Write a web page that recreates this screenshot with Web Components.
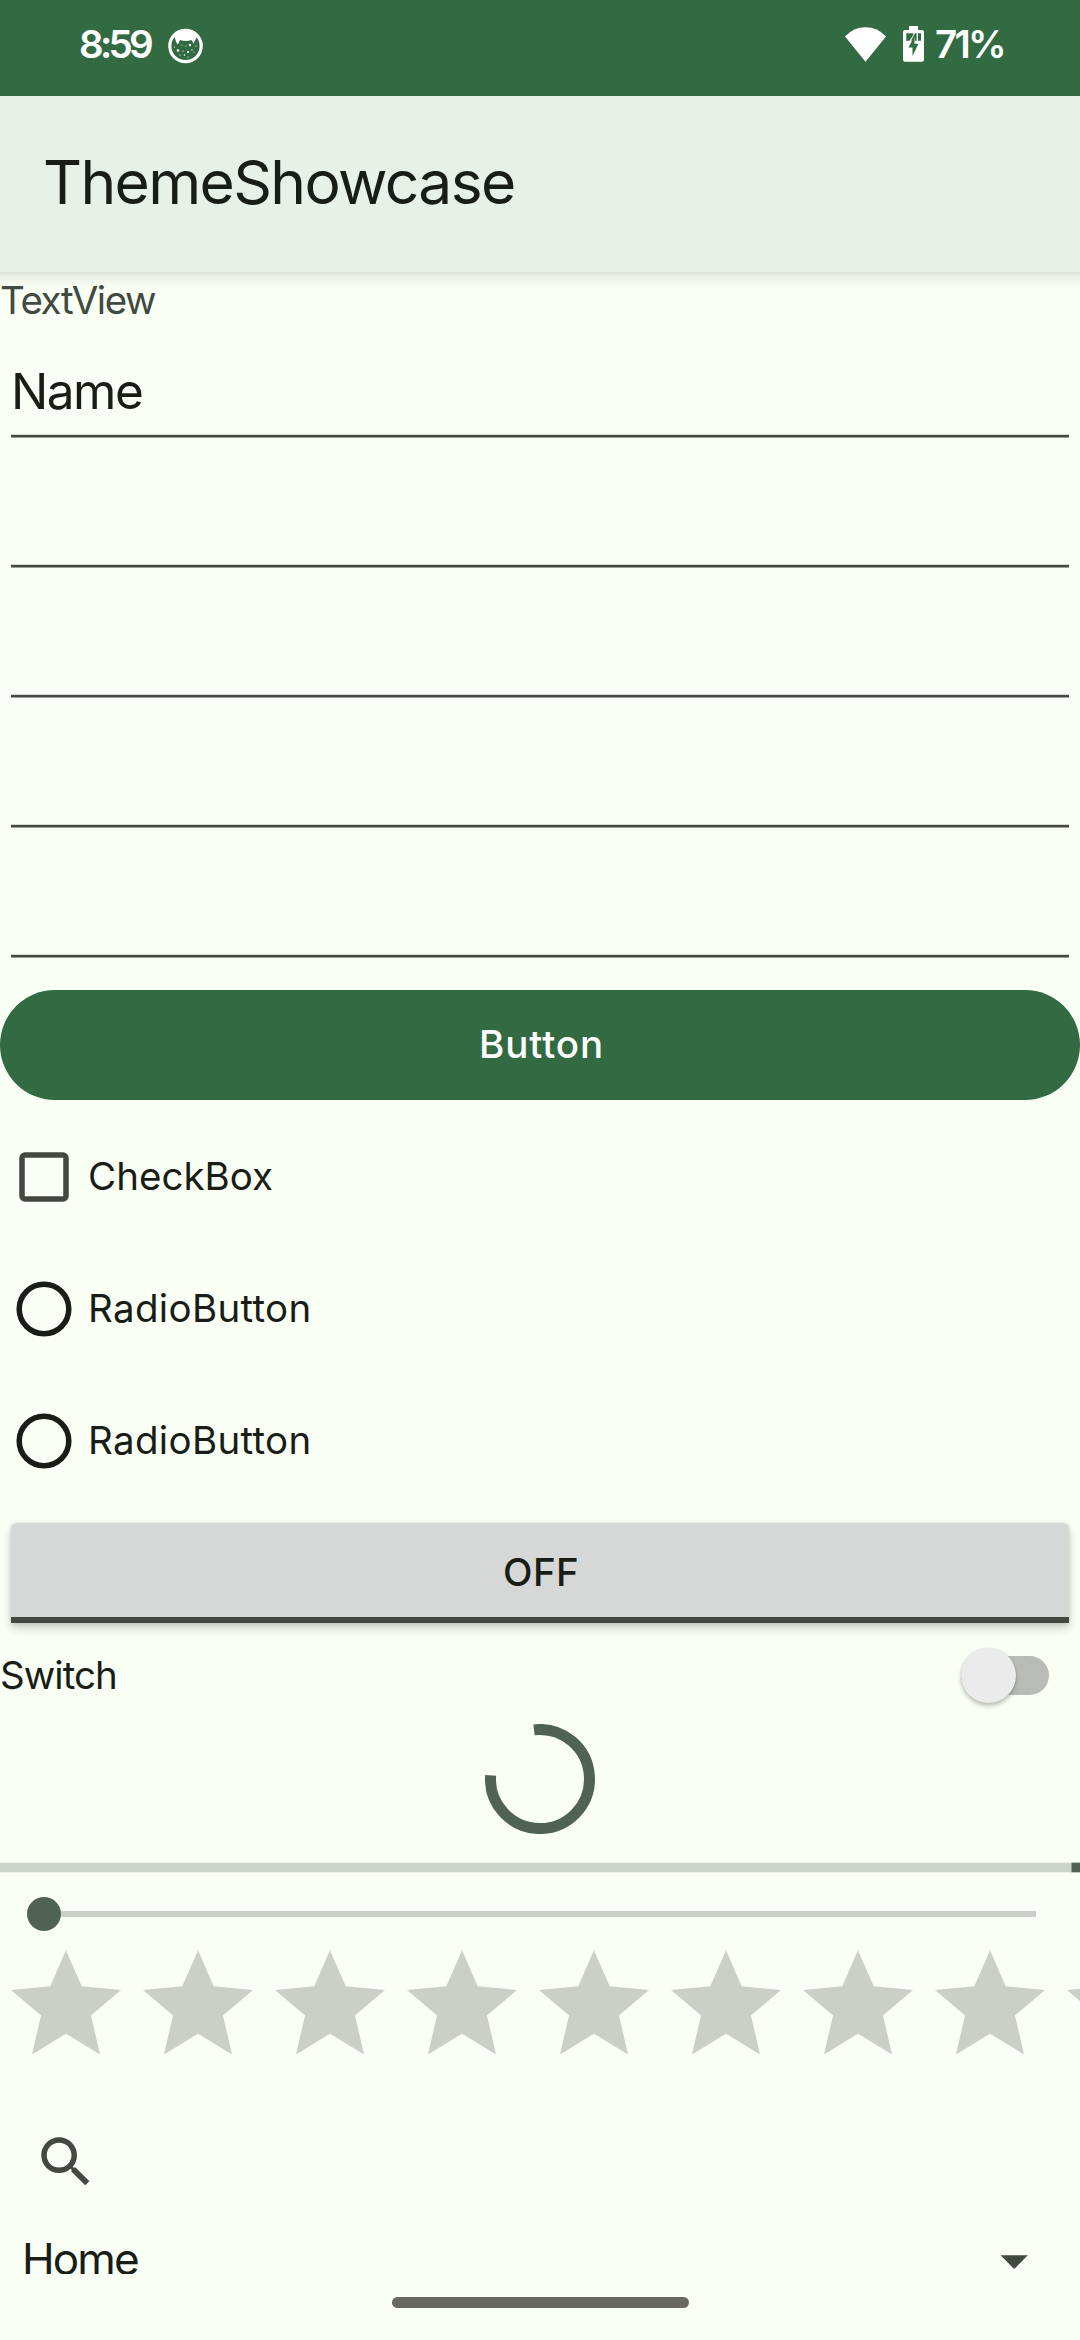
<!DOCTYPE html>
<html lang="en">
<head>
<meta charset="utf-8">
<title>ThemeShowcase</title>
<style>
html,body{margin:0;padding:0}
body{width:1080px;height:2340px;overflow:hidden;background:#f9fff5;font-family:Inter,Roboto,sans-serif}
</style>
</head>
<body>
<theme-showcase></theme-showcase>
<script>
function define(name, html, ready) {
  const tpl = document.createElement('template');
  tpl.innerHTML = html;
  customElements.define(name, class extends HTMLElement {
    constructor() {
      super();
      this.attachShadow({mode: 'open'}).append(tpl.content.cloneNode(true));
    }
    connectedCallback() { if (ready) ready.call(this, this.shadowRoot); }
  });
}

/* One line of text whose letters are spaced to fill the width in its "w" attribute. */
define('ui-text', `<style>
:host{display:block;flex:none;white-space:nowrap;color:#191d17;font-size:38.5px;line-height:1.3}
span{display:block}
</style><span><slot></slot></span>`, function (root) {
  const span = root.querySelector('span');
  const w = parseFloat(this.getAttribute('w'));
  const size = parseFloat(this.getAttribute('size') || 38.5);
  const weight = this.getAttribute('weight') || 400;
  const text = this.textContent;
  const ctx = document.createElement('canvas').getContext('2d');
  ctx.font = weight + ' ' + size + 'px Inter, Roboto, sans-serif';
  const m = ctx.measureText(text);
  const ink = m.actualBoundingBoxLeft + m.actualBoundingBoxRight;
  this.style.width = w + 'px';
  this.style.fontSize = size + 'px';
  this.style.fontWeight = weight;
  span.style.letterSpacing = ((w - ink) / (text.length - 1)) + 'px';
  span.style.marginLeft = m.actualBoundingBoxLeft + 'px';
});

define('status-bar', `<style>
:host{display:flex;align-items:center;box-sizing:border-box;height:96px;padding:0 77px 8px 80px;background:#326a41}
ui-text{color:#fff}
svg{display:block;flex:none}
.app{margin-left:16px;margin-top:3px}
.wifi{margin-left:auto}
.bat{margin:0 12px 0 17px}
</style>
<ui-text w="72" weight="600">8:59</ui-text>
<svg class="app" width="36" height="36" viewBox="0 0 36 36"><circle cx="17.5" cy="18" r="15.7" fill="none" stroke="#fff" stroke-width="3.2"/><path d="M7 7Q17.5-1 28 7L29 9 25.5 15.5 23.5 12Q18 14 12 12L10 16.500 8.500 15 6.500 9Z" fill="#fff"/><g fill="#fff"><circle cx="10" cy="22.500" r="1.300"/><circle cx="22" cy="17" r="1.200"/><circle cx="20" cy="24" r="1.100"/><circle cx="14" cy="17" r=".6"/><circle cx="18" cy="18" r=".6"/><circle cx="6.500" cy="19" r=".6"/><circle cx="15" cy="23" r=".6"/><circle cx="24" cy="22" r=".7"/><circle cx="28" cy="18" r=".6"/><circle cx="12" cy="27" r=".6"/><circle cx="16.500" cy="27" r=".8"/><circle cx="20" cy="29" r=".6"/><circle cx="26" cy="24" r=".6"/></g></svg>
<svg class="wifi" width="41" height="35" viewBox="0 0 41 35"><path d="M0 9.500Q8.500.3 20.500.3T41 9.500L20.500 34.700Z" fill="#fff"/></svg>
<svg class="bat" width="21" height="36" viewBox="0 0 21 36"><path d="M6 0h9v4h4q2 0 2 2v27.700q0 2-2 2H2q-2 0-2-2V6q0-2 2-2h4z" fill="#fff"/><path d="M3.300 7.300h7V9L6.500 14.700H3.300zM12 7.300h1.600v7.400H12V11l-2 3.700H8zM15 7.300h3v7.400h-3z" fill="#326a41"/><path d="M11.500 10v7.700h4L9.500 30v-8.500H5.500z" fill="#326a41"/></svg>
<ui-text w="67" weight="600">71%</ui-text>`);

define('app-bar', `<style>
:host{display:flex;align-items:center;box-sizing:border-box;height:176px;padding:0 45px 3px;background:#e8f1e7}
</style><ui-text w="469" size="60.5"><slot></slot></ui-text>`, function (root) {
  const t = root.querySelector('ui-text');
  t.replaceWith(Object.assign(t.cloneNode(), {textContent: this.textContent}));
});

/* Text field: a value area over a full-width underline. */
define('text-field', `<style>
:host{display:flex;flex-direction:column;height:130px;box-sizing:border-box}
.v{flex:1;display:flex;align-items:center;padding:21px 0 0 15px}
svg{display:block;flex:none;margin-left:11px}
</style><div class="v"><slot></slot></div><svg width="1058" height="4"><rect y=".8" width="1058" height="2.700" fill="#424940"/></svg>`);

define('filled-button', `<style>
:host{display:flex;align-items:center;justify-content:center;box-sizing:border-box;height:110px;padding-bottom:2px;padding-left:3px;border-radius:55px;background:#326a41}
::slotted(ui-text){color:#fff}
</style><slot></slot>`);

define('choice-row', `<style>
:host{display:flex;align-items:center;height:132px;padding-left:16px;box-sizing:border-box}
svg{display:block}
div{padding:0 0 2px 18px}
:host([kind=radio]) div{padding-left:19px}
rect,circle{fill:none;stroke-width:5.500}
</style><svg width="56" height="56" viewBox="-28 -28 56 56"></svg><div><slot></slot></div>`, function (root) {
  root.querySelector('svg').innerHTML = this.getAttribute('kind') === 'check'
    ? '<rect x="-22" y="-22" width="44" height="44" rx="3" stroke="#424940"/>'
    : '<circle r="24.800" stroke="#191d17"/>';
});

define('toggle-button', `<style>
:host{display:flex;align-items:center;justify-content:center;box-sizing:border-box;height:100px;margin:0 11px;padding:4px 0 0 2px;border-bottom:6px solid #424940;border-radius:6px 6px 0 0;background:#d6d8d7;box-shadow:0 5px 8px rgba(0,0,0,.2),0 0 4px rgba(0,0,0,.1)}
</style><slot></slot>`);

define('switch-row', `<style>
:host{display:flex;align-items:center;justify-content:space-between;height:74px;padding:0 31px 0 2px}
.t{flex:none;display:flex;align-items:center;width:88px;height:39px;border-radius:20px;background:#b9bcb6}
.t i{width:55px;height:55px;border-radius:50%;background:#ebebeb;box-shadow:0 3px 4px rgba(0,0,0,.24),0 0 2px rgba(0,0,0,.12)}
</style><slot></slot><div class="t"><i></i></div>`);

define('progress-ring', `<style>
:host{display:flex;justify-content:center;height:110px}
</style><svg width="110" height="110" viewBox="-55 -55 110 110"><path d="M-6-49.100A49.500 49.500 0 1 1-49.400-3.600" fill="none" stroke="#506352" stroke-width="11"/></svg>`);

define('progress-bar', `<style>:host,svg{display:block}</style>
<svg width="1080" height="11"><rect y=".7" width="1080" height="9.600" fill="#cdd4ca"/><rect x="1071.500" y=".7" width="9" height="9.600" fill="#506352"/></svg>`);

define('seek-bar', `<style>
:host{display:flex;align-items:center;height:34px;padding:0 44px 0 27px}
i{width:34px;height:34px;border-radius:50%;background:#506352}
b{flex:1;height:6px;background:#cacfc8}
</style><i></i><b></b>`);

define('rating-bar', `<style>
:host{display:flex;width:1080px;height:132px;overflow:hidden}
svg{display:block;flex:none}
</style>`, function (root) {
  for (let i = 0; i < 9; i++) root.innerHTML +=
    '<svg width="132" height="132"><path d="M66 14.300 81.700 50.300 121 54 91 79.500 100 118.500 66 97.700 32 118.500 41 79.500 11 54 50.300 50.300Z" fill="#cacfc8"/></svg>';
});

define('search-button', `<style>:host{display:block;padding-left:33px}svg{display:block}</style>
<svg width="66" height="66" viewBox="0 0 24 24"><path fill="#424940" d="M15.500 14h-.79l-.28-.27C15.410 12.590 16 11.110 16 9.500 16 5.910 13.090 3 9.500 3S3 5.910 3 9.500 5.910 16 9.500 16c1.610 0 3.090-.59 4.230-1.570l.27.28v.79l5 4.990L20.490 19l-4.990-5zm-6 0C7.010 14 5 11.990 5 9.500S7.010 5 9.500 5 14 7.010 14 9.500 11.990 14 9.500 14z"/></svg>`);

define('drop-down', `<style>
:host{display:flex;align-items:center;justify-content:space-between;height:66px;padding:0 52px 0 25px}
svg{display:block;margin-top:4px}
</style><slot></slot><svg width="28" height="14"><path d="M.5.3h27.300L14.200 14z" fill="#424940"/></svg>`);

define('theme-showcase', `<style>
:host{display:flex;flex-direction:column;width:1080px;height:2340px;background:#f9fff5}
main{height:2002px;flex:none;overflow:hidden;box-sizing:border-box;background:linear-gradient(#dce3da,#ecf2e9 5px,#f5fbf1 12px,#f9fff5 20px)}
.caption{display:flex;align-items:center;height:56px;padding-left:1px}
.caption ui-text{color:#424940}
text-field.first{height:110px}
filled-button{margin-top:32px}
choice-row.first{margin-top:11px}
toggle-button{margin-top:16px}
switch-row{margin-top:15px}
progress-ring{margin-top:12px}
progress-bar{margin-top:28px}
seek-bar{margin-top:24px}
rating-bar{margin-top:5px}
search-button{margin-top:61px}
drop-down{margin-top:32px}
nav{flex:1;display:flex;justify-content:center;padding-top:23px}
nav i{width:297px;height:11px;border-radius:6px;background:#68695f}
</style>
<status-bar></status-bar>
<app-bar>ThemeShowcase</app-bar>
<main>
<div class="caption"><ui-text w="155">TextView</ui-text></div>
<text-field class="first"><ui-text w="127" size="49.5">Name</ui-text></text-field>
<text-field></text-field><text-field></text-field><text-field></text-field><text-field></text-field>
<filled-button><ui-text w="119" weight="500">Button</ui-text></filled-button>
<choice-row class="first" kind="check"><ui-text w="182">CheckBox</ui-text></choice-row>
<choice-row kind="radio"><ui-text w="217.500">RadioButton</ui-text></choice-row>
<choice-row kind="radio"><ui-text w="217.500">RadioButton</ui-text></choice-row>
<toggle-button><ui-text w="72" weight="500">OFF</ui-text></toggle-button>
<switch-row><ui-text w="113">Switch</ui-text></switch-row>
<progress-ring></progress-ring>
<progress-bar></progress-bar>
<seek-bar></seek-bar>
<rating-bar></rating-bar>
<search-button></search-button>
<drop-down><ui-text w="113" size="44">Home</ui-text></drop-down>
</main>
<nav><i></i></nav>`);
</script>
</body>
</html>
